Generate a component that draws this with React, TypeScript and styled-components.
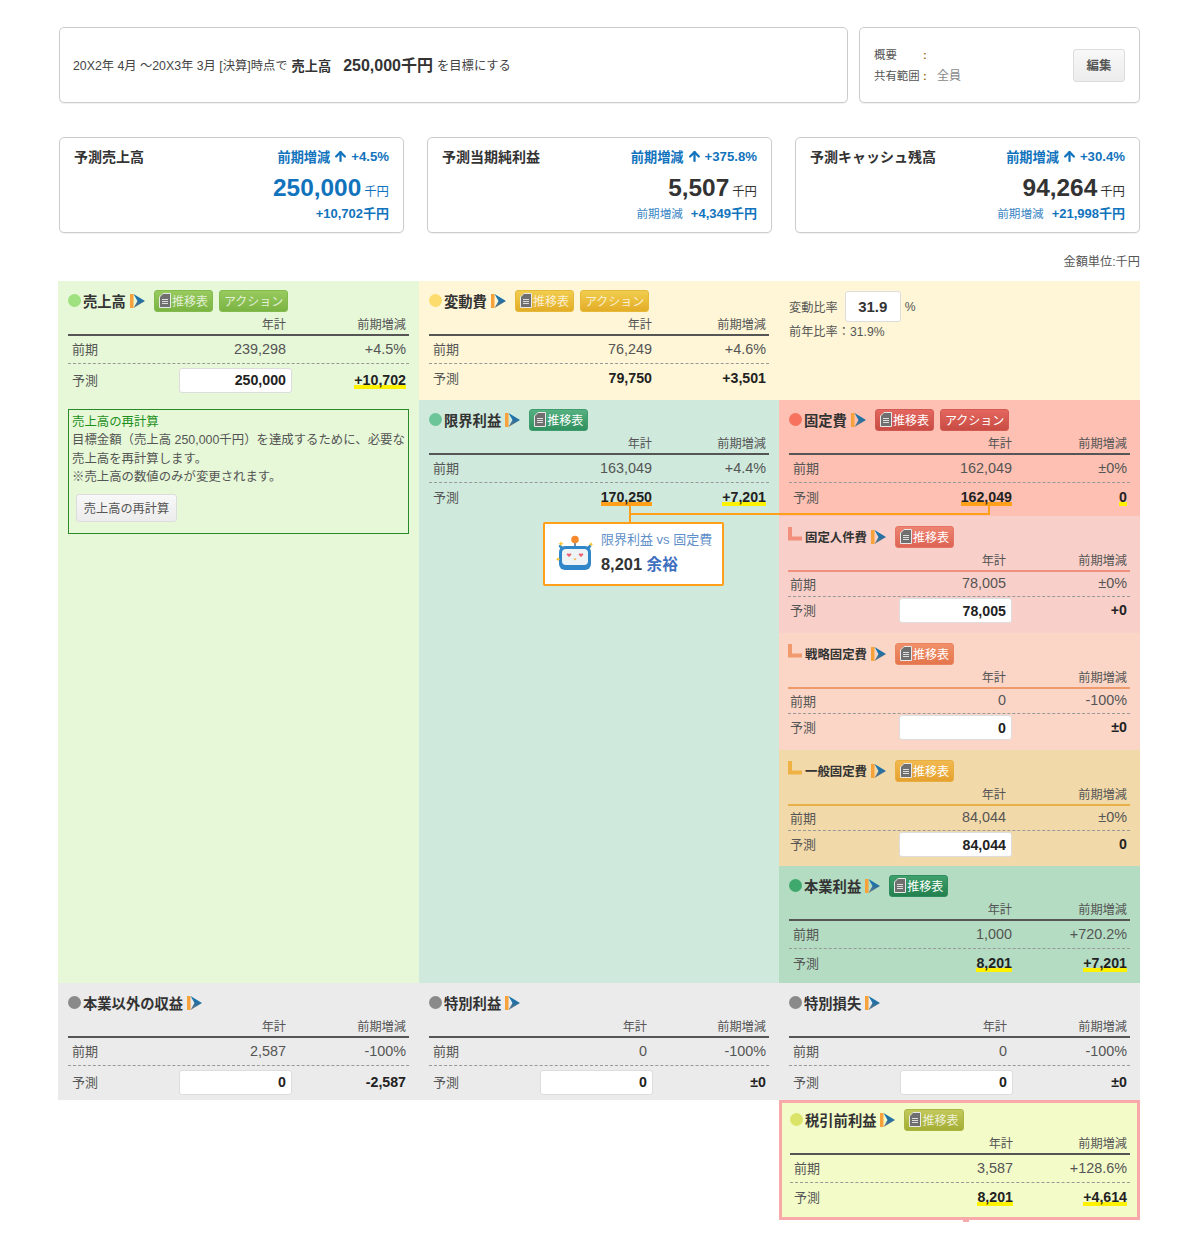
import React from "react";
import styled, { createGlobalStyle } from "styled-components";
import { ArrowUp } from "lucide-react";

const FONT = `"Liberation Sans", "Noto Sans CJK JP", sans-serif`;

const GlobalStyle = createGlobalStyle`
  html, body { margin: 0; padding: 0; background: #fff; }
  body { font-family: ${FONT}; color: #333; }
  * { box-sizing: border-box; }
`;

type ButtonTone = "lime" | "gold" | "teal" | "red" | "salmon" | "coral" | "amber" | "forest" | "olive";

const buttonColors: Record<ButtonTone, [string, string, string]> = {
  lime: ["#98ca5e", "#7bb443", "#84bb4e"],
  gold: ["#f1cd4e", "#e3ad27", "#e6b93a"],
  teal: ["#55b080", "#2f9060", "#3f9c6c"],
  red: ["#e4675f", "#c94c44", "#d25a52"],
  salmon: ["#ee8270", "#dd6455", "#e47464"],
  coral: ["#f0906a", "#e4764c", "#ea8460"],
  amber: ["#f1b94f", "#e6a12f", "#e8ae40"],
  forest: ["#3fa06c", "#22804f", "#2f8c5c"],
  olive: ["#c2c95a", "#a4ae34", "#aab544"],
};

const Page = styled.div`
  width: 1200px;
  min-height: 1251px;
  padding: 27px 60px 31px 58px;
`;

const Summary = styled.div`
  display: grid;
  grid-template-columns: 789px 281px;
  gap: 11px;
  height: 76px;
  margin-left: 1px;
`;

const Box = styled.div`
  border: 1px solid #ccc;
  border-radius: 5px;
  background: #fff;
  box-shadow: 0 1px 1px rgba(0, 0, 0, 0.06);
`;

const GoalBox = styled(Box)`
  display: flex;
  align-items: center;
  padding: 0 13px 0 13px;
  font-size: 12.3px;
  color: #444;
`;

const GoalStrong = styled.strong`
  font-size: 13.2px;
  font-weight: 700;
  color: #333;
  margin: 0 4px;
`;

const GoalAmount = styled.strong`
  font-size: 16px;
  font-weight: 700;
  color: #333;
  margin: -2px 4px 0 8px;
`;

const InfoBox = styled(Box)`
  display: flex;
  align-items: center;
  justify-content: space-between;
  padding: 0 14px 0 14px;
`;

const InfoList = styled.div`
  display: grid;
  grid-template-columns: 49px 14px 1fr;
  row-gap: 5px;
  font-size: 11.4px;
  line-height: 16px;
  color: #555;
  white-space: nowrap;
`;

const InfoColon = styled.span`
  font-weight: 700;
  color: #a8761f;
`;

const InfoValue = styled.span`
  color: #888;
  font-size: 12px;
`;

const GrayButton = styled.button`
  font-family: ${FONT};
  border: 1px solid #ddd;
  border-radius: 3px;
  background: linear-gradient(#f8f8f8, #ececec);
  color: #555;
  font-size: 12.4px;
  padding: 0;
`;

const EditButton = styled(GrayButton)`
  width: 52px;
  height: 33px;
  font-weight: 700;
`;

const KpiRow = styled.div`
  display: grid;
  grid-template-columns: repeat(3, 1fr);
  gap: 23px;
  width: 1081px;
  margin: 34px 0 0 1px;
`;

const KpiCard = styled(Box)`
  height: 96px;
  padding: 9px 14px 0;
`;

const KpiTop = styled.div`
  display: flex;
  align-items: center;
  justify-content: space-between;
  height: 18px;
`;

const KpiTitle = styled.span`
  font-size: 14px;
  font-weight: 700;
  color: #333;
`;

const KpiChange = styled.span`
  display: flex;
  align-items: center;
  gap: 3px;
  font-size: 13.2px;
  font-weight: 700;
  color: #1273bd;
`;

const KpiValue = styled.div<{ $accent?: boolean }>`
  display: flex;
  justify-content: flex-end;
  align-items: baseline;
  gap: 3px;
  margin-top: 8px;
  height: 30px;
  font-size: 24.4px;
  font-weight: 700;
  line-height: 30px;
  color: ${(p) => (p.$accent ? "#1273bd" : "#333")};
`;

const KpiUnit = styled.span`
  font-size: 12.4px;
  font-weight: 400;
`;

const KpiDelta = styled.div`
  display: flex;
  justify-content: flex-end;
  align-items: center;
  gap: 8px;
  font-size: 13px;
  font-weight: 700;
  color: #1273bd;
`;

const KpiDeltaLabel = styled.span`
  font-size: 11.6px;
  font-weight: 400;
  color: #3a86c4;
`;

const UnitNote = styled.div`
  height: 48px;
  padding-top: 21px;
  font-size: 12.2px;
  line-height: 16px;
  color: #555;
  text-align: right;
`;

const Board = styled.div`
  position: relative;
  display: grid;
  grid-template-columns: 361px 360px 361px;
  grid-template-rows: 119px 583px 117px 120px;
`;

const Section = styled.section<{ $bg: string; $compact?: boolean }>`
  background: ${(p) => p.$bg};
  padding: ${(p) => (p.$compact ? "10px 10px 0 9px" : "9px 10px 0")};
`;

const SalesSection = styled(Section)`
  grid-column: 1;
  grid-row: 1 / span 2;
`;

const VariableBand = styled.div`
  grid-column: 2 / span 2;
  grid-row: 1;
  display: grid;
  grid-template-columns: 360px 361px;
  background: #fef6d6;
`;

const RatioPane = styled.div`
  padding: 10px 0 0 10px;
  font-size: 12.2px;
  color: #555;
`;

const RatioRow = styled.div`
  display: flex;
  align-items: center;
  height: 31px;
`;

const RatioInput = styled.input`
  width: 56px;
  height: 31px;
  margin: 0 4px 0 7px;
  border: 1px solid #ddd;
  border-radius: 3px;
  background: #fff;
  font: 700 15px ${FONT};
  color: #333;
  text-align: center;
`;

const RatioPrev = styled.div`
  margin-top: 2px;
  line-height: 16px;
`;

const MarginSection = styled(Section)`
  grid-column: 2;
  grid-row: 2;
`;

const FixedStack = styled.div`
  grid-column: 3;
  grid-row: 2;
  display: grid;
  grid-template-rows: 116px 117px 117px 116px 117px;
`;

const FinalSection = styled.section`
  grid-column: 3;
  grid-row: 4;
  background: #f3fbc9;
  border: 3px solid #f8a9a9;
  padding: 6px 7px 0 8px;
  position: relative;
  &::after {
    content: "";
    position: absolute;
    left: 181px;
    bottom: -5px;
    width: 6px;
    height: 2px;
    background: #f8a9a9;
  }
`;

const Head = styled.div`
  display: flex;
  align-items: center;
  height: 21px;
`;

const Dot = styled.span<{ $color: string }>`
  width: 13px;
  height: 13px;
  border-radius: 50%;
  margin-right: 2px;
  background: ${(p) => p.$color};
`;

const SubMark = styled.svg`
  width: 14px;
  height: 14px;
  margin: -6px 3px 0 0;
`;

const Title = styled.h2<{ $small?: boolean }>`
  margin: 0;
  font-size: ${(p) => (p.$small ? "12.4px" : "14.3px")};
  font-weight: 700;
  color: #333;
  white-space: nowrap;
`;

const DetailIcon = styled.svg`
  width: 15px;
  height: 16px;
  margin: 0 9px 0 4px;
  flex: none;
`;

const HeadButton = styled.button<{ $tone: ButtonTone; $faded?: boolean }>`
  display: flex;
  align-items: center;
  justify-content: center;
  gap: 1px;
  height: 22px;
  margin-right: 6px;
  padding: 0 4px;
  font-family: ${FONT};
  font-size: 12px;
  border-radius: 3px;
  border: 1px solid ${(p) => buttonColors[p.$tone][2]};
  background: linear-gradient(${(p) => buttonColors[p.$tone][0]}, ${(p) => buttonColors[p.$tone][1]});
  color: ${(p) => (p.$faded ? "rgba(255, 255, 255, 0.78)" : "#fff")};
  white-space: nowrap;
`;

const Row = styled.div`
  display: grid;
  grid-template-columns: 110px 113px 1fr;
  align-items: center;
  font-size: 14.4px;
  color: #555;
`;

const ColumnHead = styled(Row)<{ $rule: string }>`
  height: 25px;
  padding-top: 3px;
  border-bottom: 2px solid ${(p) => p.$rule};
  font-size: 12.2px;
  color: #555;
`;

const PrevRow = styled(Row)<{ $compact?: boolean }>`
  height: ${(p) => (p.$compact ? "25px" : "28px")};
  padding-bottom: 2px;
  border-bottom: 1px dashed #999;
`;

const ForecastRow = styled(Row)<{ $height: number }>`
  height: ${(p) => p.$height}px;
  color: #222;
`;

const RowLabel = styled.span<{ $compact?: boolean }>`
  font-size: 13px;
  color: #555;
  padding-left: ${(p) => (p.$compact ? "2px" : "4px")};
`;

const ForecastLabel = styled(RowLabel)`
  padding-bottom: 2px;
`;

const ValueCell = styled.span<{ $inset?: boolean }>`
  text-align: right;
  padding-right: ${(p) => (p.$inset ? "5px" : "0")};
`;

const DeltaCell = styled.span`
  text-align: right;
  padding-right: 3px;
`;

const Strong = styled.strong<{ $mark?: "yellow" | "orange" }>`
  display: inline-block;
  font-size: 14.2px;
  font-weight: 700;
  line-height: 17px;
  color: #222;
  background: ${(p) =>
    p.$mark === "yellow"
      ? "linear-gradient(transparent 13px, #fff200 13px)"
      : p.$mark === "orange"
        ? "linear-gradient(transparent 13px, #ff9f1a 13px)"
        : "none"};
`;

const ValueInput = styled.input`
  width: 113px;
  height: 25px;
  margin-left: 1px;
  padding: 0 5px 0 0;
  border: 1px solid #ddd;
  border-radius: 3px;
  background: #fff;
  font: 700 14.2px ${FONT};
  color: #222;
  text-align: right;
`;

const RecalcBox = styled.div`
  position: relative;
  height: 125px;
  margin-top: 13px;
  padding: 3px 3px;
  border: 1px solid #2a8a2a;
  font-size: 12.4px;
  line-height: 18.4px;
  color: #555;
  white-space: nowrap;
`;

const RecalcTitle = styled.div`
  color: #1d8f1d;
`;

const RecalcButton = styled(GrayButton)`
  display: block;
  width: 101px;
  height: 28px;
  margin: 7px 0 0 4px;
  font-size: 12.2px;
`;

const Callout = styled.div`
  display: flex;
  align-items: center;
  width: 181px;
  height: 64px;
  margin: 10px 0 0 114px;
  padding: 0 0 0 11px;
  gap: 7px;
  position: relative;
  background: #fff;
  border: 2px solid #ff9f1a;
  border-radius: 2px;
`;

const CalloutText = styled.div`
  margin-bottom: 3px;
`;

const CalloutTitle = styled.div`
  font-size: 13px;
  line-height: 16px;
  color: #5f8fc9;
  white-space: nowrap;
`;

const CalloutValue = styled.div`
  margin-top: 7px;
  font-size: 16.4px;
  line-height: 18px;
  font-weight: 700;
  color: #333;
`;

const CalloutNote = styled.span`
  color: #3f6fbf;
  font-size: 15.6px;
`;

const ConnectorRun = styled.div`
  position: absolute;
  left: 571px;
  top: 224px;
  width: 361px;
  height: 10px;
  border: solid #ff9f1a;
  border-width: 0 2px 2px 2px;
  pointer-events: none;
`;

const ConnectorStem = styled.div`
  position: absolute;
  left: 571px;
  top: 234px;
  width: 2px;
  height: 8px;
  background: #ff9f1a;
`;

const ArrowGlyph = () => (
  <DetailIcon viewBox="0 0 15 16">
    <defs>
      <linearGradient id="chev" x1="0" y1="0" x2="0" y2="1">
        <stop offset="0" stopColor="#1078b8" />
        <stop offset="0.55" stopColor="#2a6f9e" />
        <stop offset="1" stopColor="#77787c" />
      </linearGradient>
    </defs>
    <rect x="0" y="1" width="3.5" height="14" fill="#f7a23b" />
    <path d="M3.5 1 L15 8 L3.500 15 L7.500 8 Z" fill="url(#chev)" />
  </DetailIcon>
);

const DocGlyph = () => (
  <svg width="12" height="15" viewBox="0 0 12 15">
    <path d="M4 .5H11.500V14.500H.5V4Z" fill="#6f6f6f" stroke="#e8e8e8" />
    <path d="M3 6.500H9M3 8.500H9M3 10.500H9" stroke="#ddd" />
  </svg>
);

const RobotGlyph = () => (
  <svg width="38" height="38" viewBox="0 0 38 38">
    <path d="M19 12V5" stroke="#4a6a88" strokeWidth="1.500" />
    <circle cx="19" cy="4.500" r="3.800" fill="#f58b2e" />
    <rect x="3" y="11" width="32" height="24" rx="6" fill="#2f86c9" />
    <path d="M31 12l3-2.500 1.500 1.500-2 3zM7 12L4 9.500 2.500 11l2 3z" fill="#2f86c9" />
    <rect x="6" y="14" width="26" height="16" rx="4" fill="#eef3f6" />
    <path d="M10.500 19.500l2.500 2.500 2.500-2.500-1.200-1.200-1.300.8-1.300-.8zM22.500 19.500l2.500 2.500 2.500-2.500-1.200-1.200-1.300.8-1.300-.8z" fill="#ef5f6e" />
    <path d="M17.500 23.500h3l-1.500 2z" fill="#f4a62a" />
    <path d="M5 6l.8 2 2 .8-2 .8L5 11.600l-.8-2-2-.8 2-.8zM35 7l.7 1.600 1.600.7-1.600.7-.7 1.600-.7-1.600-1.600-.7 1.600-.7zM2 22l.7 1.600 1.600.7-1.600.7-.7 1.600-.7-1.600-1.600-.7 1.600-.7z" fill="#f8c52f" />
  </svg>
);

interface ActionButton {
  label: string;
  doc?: boolean;
  faded?: boolean;
}

interface MetricProps {
  title: string;
  dot?: string;
  subColor?: string;
  tone: ButtonTone;
  action?: boolean;
  noReport?: boolean;
  fadedButtons?: boolean;
  rule?: string;
  prevValue: string;
  prevDelta: string;
  value: string;
  delta: string;
  input?: boolean;
  valueMark?: "yellow" | "orange";
  deltaMark?: "yellow" | "orange";
}

function Metric(m: MetricProps) {
  const compact = !!m.subColor;
  const buttons: ActionButton[] = [];
  if (!m.noReport) buttons.push({ label: "推移表", doc: true, faded: m.fadedButtons });
  if (m.action) buttons.push({ label: "アクション", faded: m.fadedButtons });
  const forecastHeight = compact ? 27 : m.input ? 32 : 29;
  return (
    <>
      <Head>
        {m.dot && <Dot $color={m.dot} />}
        {m.subColor && (
          <SubMark viewBox="0 0 14 14">
            <path d="M2 0V11.500H14" fill="none" stroke={m.subColor} strokeWidth="4" />
          </SubMark>
        )}
        <Title $small={compact}>{m.title}</Title>
        <ArrowGlyph />
        {buttons.map((b) => (
          <HeadButton key={b.label} $tone={m.tone} $faded={b.faded}>
            {b.doc && <DocGlyph />}
            {b.label}
          </HeadButton>
        ))}
      </Head>
      <ColumnHead $rule={m.rule ?? "#555"}>
        <span />
        <ValueCell $inset={m.input}>年計</ValueCell>
        <DeltaCell>前期増減</DeltaCell>
      </ColumnHead>
      <PrevRow $compact={compact}>
        <RowLabel $compact={compact}>前期</RowLabel>
        <ValueCell $inset={m.input}>{m.prevValue}</ValueCell>
        <DeltaCell>{m.prevDelta}</DeltaCell>
      </PrevRow>
      <ForecastRow $height={forecastHeight}>
        <ForecastLabel $compact={compact}>予測</ForecastLabel>
        {m.input ? (
          <ValueInput readOnly value={m.value} />
        ) : (
          <ValueCell>
            <Strong $mark={m.valueMark}>{m.value}</Strong>
          </ValueCell>
        )}
        <DeltaCell>
          <Strong $mark={m.deltaMark}>{m.delta}</Strong>
        </DeltaCell>
      </ForecastRow>
    </>
  );
}

interface KpiProps {
  title: string;
  change: string;
  value: string;
  delta: string;
  accent?: boolean;
}

function Kpi({ title, change, value, delta, accent }: KpiProps) {
  return (
    <KpiCard>
      <KpiTop>
        <KpiTitle>{title}</KpiTitle>
        <KpiChange>
          前期増減
          <ArrowUp size={15} strokeWidth={3.6} />
          {change}
        </KpiChange>
      </KpiTop>
      <KpiValue $accent={accent}>
        {value}
        <KpiUnit>千円</KpiUnit>
      </KpiValue>
      <KpiDelta>
        {!accent && <KpiDeltaLabel>前期増減</KpiDeltaLabel>}
        {delta}千円
      </KpiDelta>
    </KpiCard>
  );
}

export default function App() {
  return (
    <Page>
      <GlobalStyle />
      <Summary>
        <GoalBox>
          20X2年 4月 ～20X3年 3月 [決算]時点で
          <GoalStrong>売上高</GoalStrong>
          <GoalAmount>250,000千円</GoalAmount>
          を目標にする
        </GoalBox>
        <InfoBox>
          <InfoList>
            <span>概要</span>
            <InfoColon>:</InfoColon>
            <span />
            <span>共有範囲</span>
            <InfoColon>:</InfoColon>
            <InfoValue>全員</InfoValue>
          </InfoList>
          <EditButton>編集</EditButton>
        </InfoBox>
      </Summary>

      <KpiRow>
        <Kpi title="予測売上高" change="+4.5%" value="250,000" delta="+10,702" accent />
        <Kpi title="予測当期純利益" change="+375.8%" value="5,507" delta="+4,349" />
        <Kpi title="予測キャッシュ残高" change="+30.4%" value="94,264" delta="+21,998" />
      </KpiRow>

      <UnitNote>金額単位:千円</UnitNote>

      <Board>
        <SalesSection $bg="#e6f8d8">
          <Metric
            title="売上高"
            dot="#9fe07f"
            tone="lime"
            action
            fadedButtons
            prevValue="239,298"
            prevDelta="+4.5%"
            value="250,000"
            delta="+10,702"
            input
            deltaMark="yellow"
          />
          <RecalcBox>
            <RecalcTitle>売上高の再計算</RecalcTitle>
            目標金額（売上高 250,000千円）を達成するために、必要な
            <br />
            売上高を再計算します。
            <br />
            ※売上高の数値のみが変更されます。
            <RecalcButton>売上高の再計算</RecalcButton>
          </RecalcBox>
        </SalesSection>

        <VariableBand>
          <Section $bg="transparent">
            <Metric
              title="変動費"
              dot="#fbdc6c"
              tone="gold"
              action
              fadedButtons
              prevValue="76,249"
              prevDelta="+4.6%"
              value="79,750"
              delta="+3,501"
            />
          </Section>
          <RatioPane>
            <RatioRow>
              変動比率
              <RatioInput readOnly value="31.9" />%
            </RatioRow>
            <RatioPrev>前年比率：31.9%</RatioPrev>
          </RatioPane>
        </VariableBand>

        <MarginSection $bg="#cfe9dc">
          <Metric
            title="限界利益"
            dot="#6cc598"
            tone="teal"
            prevValue="163,049"
            prevDelta="+4.4%"
            value="170,250"
            delta="+7,201"
            valueMark="orange"
            deltaMark="yellow"
          />
          <Callout>
            <RobotGlyph />
            <CalloutText>
              <CalloutTitle>限界利益 vs 固定費</CalloutTitle>
              <CalloutValue>
                8,201 <CalloutNote>余裕</CalloutNote>
              </CalloutValue>
            </CalloutText>
          </Callout>
        </MarginSection>

        <FixedStack>
          <Section $bg="#fdc0b2">
            <Metric
              title="固定費"
              dot="#f8735f"
              tone="red"
              action
              prevValue="162,049"
              prevDelta="±0%"
              value="162,049"
              delta="0"
              valueMark="orange"
              deltaMark="yellow"
            />
          </Section>
          <Section $bg="#f9d0c9" $compact>
            <Metric
              title="固定人件費"
              subColor="#f28f7d"
              tone="salmon"
              rule="#f0917f"
              prevValue="78,005"
              prevDelta="±0%"
              value="78,005"
              delta="+0"
              input
            />
          </Section>
          <Section $bg="#fbd6c6" $compact>
            <Metric
              title="戦略固定費"
              subColor="#f09a6e"
              tone="coral"
              rule="#ee9a6c"
              prevValue="0"
              prevDelta="-100%"
              value="0"
              delta="±0"
              input
            />
          </Section>
          <Section $bg="#f2d9a9" $compact>
            <Metric
              title="一般固定費"
              subColor="#eeb245"
              tone="amber"
              rule="#eab048"
              prevValue="84,044"
              prevDelta="±0%"
              value="84,044"
              delta="0"
              input
            />
          </Section>
          <Section $bg="#b3dcc2">
            <Metric
              title="本業利益"
              dot="#3fa86c"
              tone="forest"
              prevValue="1,000"
              prevDelta="+720.2%"
              value="8,201"
              delta="+7,201"
              valueMark="yellow"
              deltaMark="yellow"
            />
          </Section>
        </FixedStack>

        <Section $bg="#ebebeb">
          <Metric
            title="本業以外の収益"
            dot="#8a8a8a"
            tone="teal"
            noReport
            prevValue="2,587"
            prevDelta="-100%"
            value="0"
            delta="-2,587"
            input
          />
        </Section>
        <Section $bg="#ebebeb">
          <Metric
            title="特別利益"
            dot="#8a8a8a"
            tone="teal"
            noReport
            prevValue="0"
            prevDelta="-100%"
            value="0"
            delta="±0"
            input
          />
        </Section>
        <Section $bg="#ebebeb">
          <Metric
            title="特別損失"
            dot="#8a8a8a"
            tone="teal"
            noReport
            prevValue="0"
            prevDelta="-100%"
            value="0"
            delta="±0"
            input
          />
        </Section>

        <FinalSection>
          <Metric
            title="税引前利益"
            dot="#dbe468"
            tone="olive"
            fadedButtons
            prevValue="3,587"
            prevDelta="+128.6%"
            value="8,201"
            delta="+4,614"
            valueMark="yellow"
            deltaMark="yellow"
          />
        </FinalSection>

        <ConnectorRun />
        <ConnectorStem />
      </Board>
    </Page>
  );
}
